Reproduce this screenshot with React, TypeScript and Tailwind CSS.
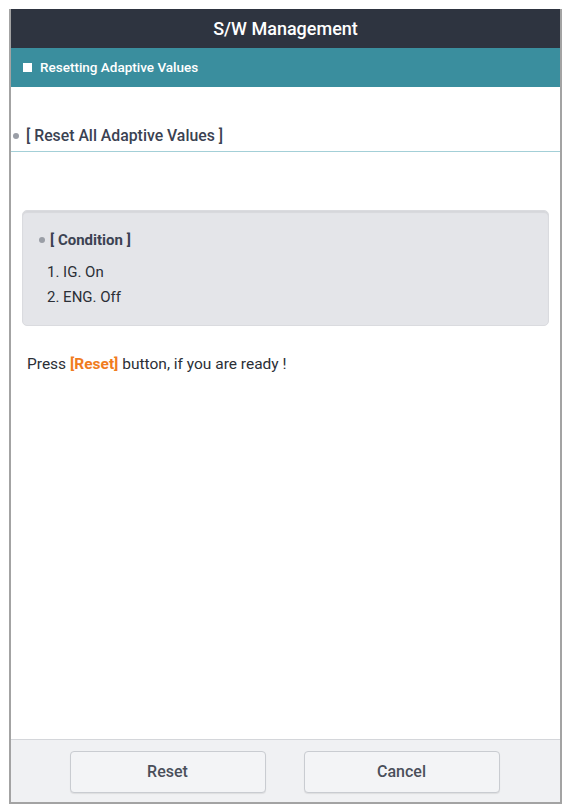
import React from "react";

export default function App() {
  return (
    <div className="w-[571px] h-[812px] bg-white pt-[9px] pl-[9px]" style={{ fontFamily: "Roboto, 'Liberation Sans', sans-serif" }}>
      <div className="w-[553px] h-[795px] flex flex-col border-x-2 border-b-2 border-[#a3a3a3]">
        <div className="h-[39px] bg-[#2e3440] flex items-center justify-center text-white text-[18px] font-medium">
          S/W Management
        </div>
        <div className="h-[39px] bg-[#3a8e9e] flex items-center pl-[12px] text-white text-[13.5px] font-medium">
          <span className="w-[9px] h-[9px] bg-white mr-[8px]" />
          Resetting Adaptive Values
        </div>
        <div className="flex-1 flex flex-col">
          <div className="mt-[33px] h-[32px] flex items-center border-b border-[#a3cfd7]">
            <span className="w-[6px] h-[6px] rounded-full bg-[#9a9ea6] ml-[2px] mr-[7px]" />
            <span className="text-[15.8px] font-medium text-[#3b4252]">[ Reset All Adaptive Values ]</span>
          </div>
          <div className="mt-[58px] mx-[11px] h-[116px] rounded-[5px] bg-[#e4e5e9] border border-[#dadbdf] shadow-[inset_0_2px_1px_rgba(0,0,0,0.06)] pl-[16px] pt-[16px]">
            <div className="flex items-center h-[26px]">
              <span className="w-[6px] h-[6px] rounded-full bg-[#9a9ea6] mr-[5px]" />
              <span className="text-[15px] font-bold text-[#3b4252]">[ Condition ]</span>
            </div>
            <div className="mt-[7px] ml-[8px] text-[15px] text-[#2b2f36] leading-[25px]">
              <div>1. IG. On</div>
              <div>2. ENG. Off</div>
            </div>
          </div>
          <div className="mt-[27px] ml-[16px] text-[15.5px] text-[#2b2f36] leading-[22px]">
            Press <span className="text-[#f07c1e] font-bold">[Reset]</span> button, if you are ready !
          </div>
        </div>
        <div className="h-[63px] bg-[#f0f1f3] border-t border-[#d4d6da] flex items-center justify-center gap-[38px] pr-[2px] pt-[2px]">
          <button className="w-[196px] h-[42px] rounded-[4px] border border-[#c9ccd1] bg-[#f3f4f6] text-[16px] font-medium text-[#4a4f5a] shadow-[0_1px_1px_rgba(0,0,0,0.08)]">
            Reset
          </button>
          <button className="w-[196px] h-[42px] rounded-[4px] border border-[#c9ccd1] bg-[#f3f4f6] text-[16px] font-medium text-[#4a4f5a] shadow-[0_1px_1px_rgba(0,0,0,0.08)]">
            Cancel
          </button>
        </div>
      </div>
    </div>
  );
}
